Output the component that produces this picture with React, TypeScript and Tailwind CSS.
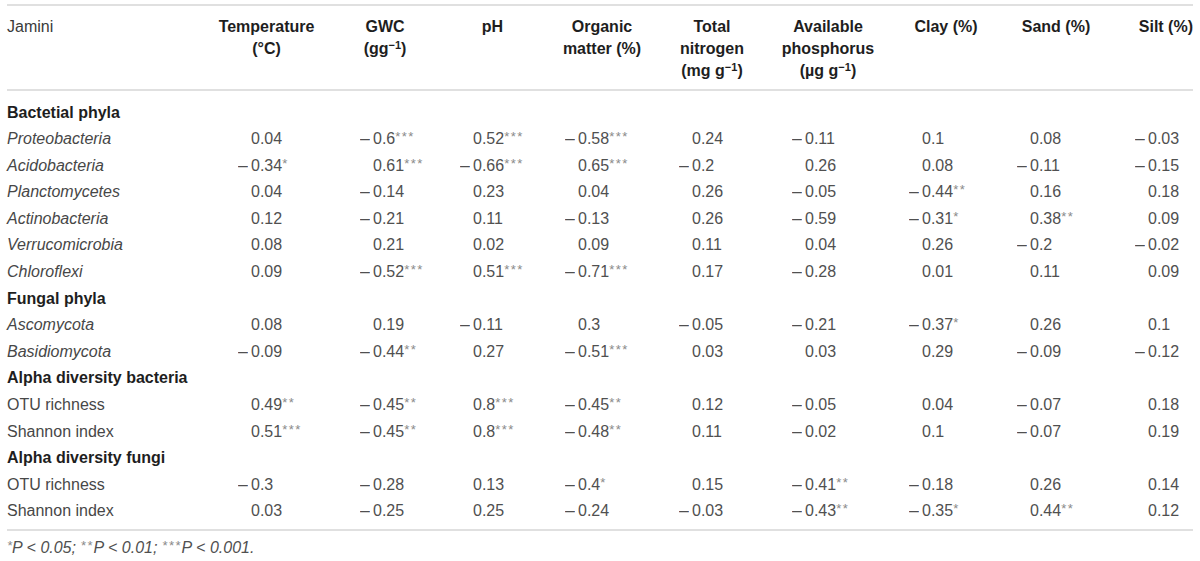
const cols = ['Temperature', 'GWC', 'pH', 'Organic', 'TN', 'AP', 'Clay', 'Sand', 'Silt']

// left offset of the first digit inside each value column
const valuePad = [
  'pl-[43px]',
  'pl-[48px]',
  'pl-[28px]',
  'pl-[38px]',
  'pl-[28px]',
  'pl-[45px]',
  'pl-[26px]',
  'pl-[34px]',
  'pl-[32px]',
]

type Row =
  | { kind: 'section'; label: string }
  | { kind: 'data'; label: string; italic?: boolean; values: string[] }

const rows: Row[] = [
  { kind: 'section', label: 'Bactetial phyla' },
  { kind: 'data', label: 'Proteobacteria', italic: true, values: ['0.04', '-0.6***', '0.52***', '-0.58***', '0.24', '-0.11', '0.1', '0.08', '-0.03'] },
  { kind: 'data', label: 'Acidobacteria', italic: true, values: ['-0.34*', '0.61***', '-0.66***', '0.65***', '-0.2', '0.26', '0.08', '-0.11', '-0.15'] },
  { kind: 'data', label: 'Planctomycetes', italic: true, values: ['0.04', '-0.14', '0.23', '0.04', '0.26', '-0.05', '-0.44**', '0.16', '0.18'] },
  { kind: 'data', label: 'Actinobacteria', italic: true, values: ['0.12', '-0.21', '0.11', '-0.13', '0.26', '-0.59', '-0.31*', '0.38**', '0.09'] },
  { kind: 'data', label: 'Verrucomicrobia', italic: true, values: ['0.08', '0.21', '0.02', '0.09', '0.11', '0.04', '0.26', '-0.2', '-0.02'] },
  { kind: 'data', label: 'Chloroflexi', italic: true, values: ['0.09', '-0.52***', '0.51***', '-0.71***', '0.17', '-0.28', '0.01', '0.11', '0.09'] },
  { kind: 'section', label: 'Fungal phyla' },
  { kind: 'data', label: 'Ascomycota', italic: true, values: ['0.08', '0.19', '-0.11', '0.3', '-0.05', '-0.21', '-0.37*', '0.26', '0.1'] },
  { kind: 'data', label: 'Basidiomycota', italic: true, values: ['-0.09', '-0.44**', '0.27', '-0.51***', '0.03', '0.03', '0.29', '-0.09', '-0.12'] },
  { kind: 'section', label: 'Alpha diversity bacteria' },
  { kind: 'data', label: 'OTU richness', values: ['0.49**', '-0.45**', '0.8***', '-0.45**', '0.12', '-0.05', '0.04', '-0.07', '0.18'] },
  { kind: 'data', label: 'Shannon index', values: ['0.51***', '-0.45**', '0.8***', '-0.48**', '0.11', '-0.02', '0.1', '-0.07', '0.19'] },
  { kind: 'section', label: 'Alpha diversity fungi' },
  { kind: 'data', label: 'OTU richness', values: ['-0.3', '-0.28', '0.13', '-0.4*', '0.15', '-0.41**', '-0.18', '0.26', '0.14'] },
  { kind: 'data', label: 'Shannon index', values: ['0.03', '-0.25', '0.25', '-0.24', '-0.03', '-0.43**', '-0.35*', '0.44**', '0.12'] },
]

const grid =
  'grid grid-cols-[201px_117px_120px_95px_124px_96px_136px_100px_120px_77px]'

function Value({ v }: { v: string }) {
  const neg = v.startsWith('-')
  const body = v.replace(/^-/, '').replace(/\*+$/, '')
  const stars = v.match(/\*+$/)?.[0] ?? ''
  return (
    <span className="whitespace-nowrap">
      {neg && <span className="-ml-[13px] inline-block w-[13px] scale-x-110 origin-left">–</span>}
      {body}
      {stars && (
        <span className="relative -top-[3px] text-[13px] tracking-[1.5px] text-[#8a8a8a]">
          {stars}
        </span>
      )}
    </span>
  )
}

function Sup({ children }: { children: React.ReactNode }) {
  return <sup className="text-[11px]">{children}</sup>
}

export default function App() {
  return (
    <div className="w-[1200px] h-[561px] bg-white px-[7px] pt-[4px] font-['Liberation_Sans',Arial,sans-serif] text-[16px]">
      <div className="h-[2px] bg-[#e0e0e0]" />

      {/* Header */}
      <div className={`${grid} pt-[10px] pb-[7px] leading-[22px]`}>
        <div className="text-[#3a3a3a]">Jamini</div>
        <div className="text-center font-bold text-[#1e1e1e]">
          Temperature
          <br />
          (°C)
        </div>
        <div className="text-center font-bold text-[#1e1e1e]">
          GWC
          <br />
          (gg<Sup>−1</Sup>)
        </div>
        <div className="text-center font-bold text-[#1e1e1e]">pH</div>
        <div className="text-center font-bold text-[#1e1e1e]">
          Organic
          <br />
          matter (%)
        </div>
        <div className="text-center font-bold text-[#1e1e1e]">
          Total
          <br />
          nitrogen
          <br />
          (mg g<Sup>−1</Sup>)
        </div>
        <div className="text-center font-bold text-[#1e1e1e]">
          Available
          <br />
          phosphorus
          <br />
          (µg g<Sup>−1</Sup>)
        </div>
        <div className="text-center font-bold text-[#1e1e1e]">Clay (%)</div>
        <div className="text-center font-bold text-[#1e1e1e]">Sand (%)</div>
        <div className="text-right font-bold text-[#1e1e1e]">Silt (%)</div>
      </div>

      <div className="h-[2px] bg-[#e0e0e0]" />

      {/* Body */}
      <div className="mt-[8.5px]">
        {rows.map((row, i) =>
          row.kind === 'section' ? (
            <div key={i} className="h-[26.6px] leading-[26.6px] font-bold text-[#1e1e1e]">
              {row.label}
            </div>
          ) : (
            <div key={i} className={`${grid} h-[26.6px] leading-[26.6px] text-[#505050]`}>
              <div className={row.italic ? 'italic text-[#474747]' : 'text-[#474747]'}>{row.label}</div>
              {row.values.map((v, j) => (
                <div key={cols[j]} className={valuePad[j]}>
                  <Value v={v} />
                </div>
              ))}
            </div>
          ),
        )}
      </div>

      <div className="mt-[4px] h-[2px] bg-[#e0e0e0]" />

      <div className="mt-[7px] leading-[20px] italic text-[#505050]">
        <span className="relative -top-[3px] text-[13px] text-[#8a8a8a]">*</span>P &lt; 0.05;{' '}
        <span className="relative -top-[3px] text-[13px] tracking-[1.5px] text-[#8a8a8a]">**</span>P &lt; 0.01;{' '}
        <span className="relative -top-[3px] text-[13px] tracking-[1.5px] text-[#8a8a8a]">***</span>P &lt; 0.001.
      </div>
    </div>
  )
}
